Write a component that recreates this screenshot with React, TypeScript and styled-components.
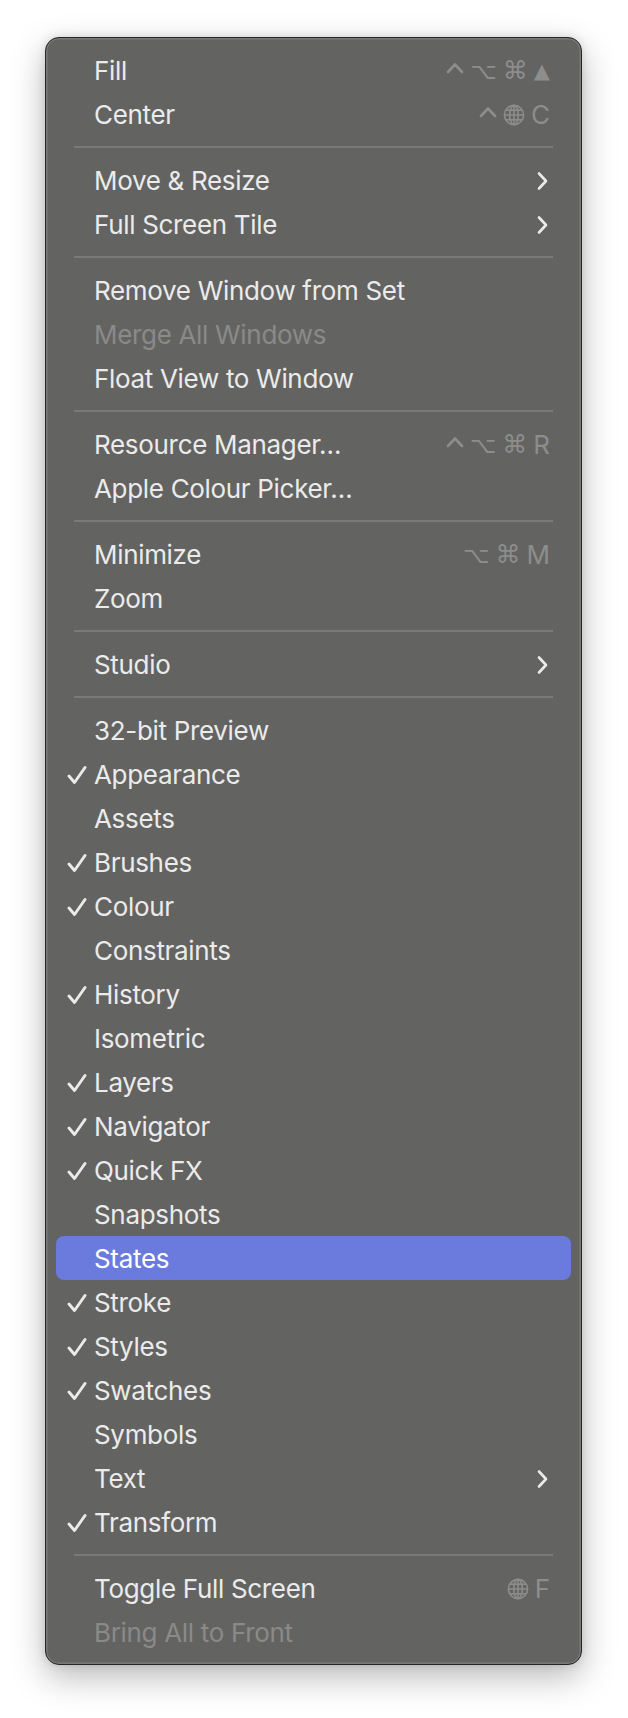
import React from "react";
import styled, { createGlobalStyle } from "styled-components";

const GlobalStyle = createGlobalStyle`
  html, body {
    margin: 0;
    padding: 0;
    background: #ffffff;
  }
  * {
    box-sizing: border-box;
  }
`;

const Page = styled.div`
  width: 628px;
  height: 1718px;
  padding: 37px 0 0 45px;
  font-family: "Inter", "DejaVu Sans", sans-serif;
`;

const Menu = styled.div`
  width: 537px;
  padding: 10px 0;
  background: #636362;
  border: 1px solid #262626;
  border-radius: 14px;
  box-shadow: inset 0 0 0 1.5px rgba(255, 255, 255, 0.14),
    0 12px 34px rgba(0, 0, 0, 0.28), 0 0 10px rgba(0, 0, 0, 0.12);
  display: flex;
  flex-direction: column;
`;

const Row = styled.div<{ $active?: boolean; $disabled?: boolean }>`
  height: 44px;
  margin: 0 10px;
  padding: 1px 21px 0 0;
  border-radius: 8px;
  display: grid;
  grid-template-columns: 38px 1fr auto;
  align-items: center;
  background: ${(p) => (p.$active ? "#6a7bdd" : "transparent")};
  color: ${(p) => (p.$disabled ? "#8a8a89" : p.$active ? "#ffffff" : "#ebebeb")};
  font-size: 26px;
  line-height: 44px;
`;

const CheckCell = styled.div`
  display: flex;
  align-items: center;
  padding-left: 11px;
  height: 44px;
`;

const Label = styled.span`
  white-space: nowrap;
  letter-spacing: -0.32px;
`;

const Shortcut = styled.div`
  display: flex;
  align-items: center;
  gap: 6px;
  color: #8d8d8c;
`;

const Key = styled.span`
  font-family: "Inter", "DejaVu Sans", sans-serif;
  font-size: 26px;
  line-height: 44px;
`;

const Glyph = styled.span<{ $size: number }>`
  font-family: "DejaVu Sans", sans-serif;
  font-size: ${(p) => p.$size}px;
  line-height: 44px;
`;

const Arrow = styled.div`
  display: flex;
  align-items: center;
  margin-right: 2px;
`;

const Separator = styled.div`
  height: 22px;
  display: flex;
  align-items: center;
  padding: 0 28px;
  &::after {
    content: "";
    flex: 1;
    height: 2px;
    background: #7a7a79;
  }
`;

const CheckMark = () => (
  <svg width="20" height="20" viewBox="0 0 20 20">
    <polyline
      points="2,11 7.5,17.5 18,2.5"
      fill="none"
      stroke="#ebebeb"
      strokeWidth="2.9"
      strokeLinecap="round"
      strokeLinejoin="round"
    />
  </svg>
);

const Chevron = () => (
  <svg width="11" height="20" viewBox="0 0 11 20">
    <polyline
      points="2,2.5 9,10 2,17.5"
      fill="none"
      stroke="#ebebeb"
      strokeWidth="2.6"
      strokeLinecap="round"
      strokeLinejoin="round"
    />
  </svg>
);

const Caret = () => (
  <svg width="18" height="12" viewBox="0 0 18 12" style={{ marginBottom: 6 }}>
    <polyline
      points="2,10 9,2.5 16,10"
      fill="none"
      stroke="#8d8d8c"
      strokeWidth="2.6"
      strokeLinecap="round"
      strokeLinejoin="round"
    />
  </svg>
);

const Globe = () => (
  <svg width="22" height="22" viewBox="0 0 22 22" fill="none" stroke="#8d8d8c" strokeWidth="1.6">
    <circle cx="11" cy="11" r="9.6" />
    <ellipse cx="11" cy="11" rx="4.3" ry="9.6" />
    <line x1="11" y1="1.4" x2="11" y2="20.6" />
    <line x1="1.4" y1="11" x2="20.6" y2="11" />
    <line x1="3" y1="6.2" x2="19" y2="6.2" />
    <line x1="3" y1="15.8" x2="19" y2="15.8" />
  </svg>
);

type Item =
  | "sep"
  | {
      label: string;
      check?: boolean;
      disabled?: boolean;
      active?: boolean;
      submenu?: boolean;
      keys?: string[];
    };

const items: Item[] = [
  { label: "Fill", keys: ["ctrl", "⌥", "⌘", "▲"] },
  { label: "Center", keys: ["ctrl", "globe", "C"] },
  "sep",
  { label: "Move & Resize", submenu: true },
  { label: "Full Screen Tile", submenu: true },
  "sep",
  { label: "Remove Window from Set" },
  { label: "Merge All Windows", disabled: true },
  { label: "Float View to Window" },
  "sep",
  { label: "Resource Manager…", keys: ["ctrl", "⌥", "⌘", "R"] },
  { label: "Apple Colour Picker…" },
  "sep",
  { label: "Minimize", keys: ["⌥", "⌘", "M"] },
  { label: "Zoom" },
  "sep",
  { label: "Studio", submenu: true },
  "sep",
  { label: "32-bit Preview" },
  { label: "Appearance", check: true },
  { label: "Assets" },
  { label: "Brushes", check: true },
  { label: "Colour", check: true },
  { label: "Constraints" },
  { label: "History", check: true },
  { label: "Isometric" },
  { label: "Layers", check: true },
  { label: "Navigator", check: true },
  { label: "Quick FX", check: true },
  { label: "Snapshots" },
  { label: "States", active: true },
  { label: "Stroke", check: true },
  { label: "Styles", check: true },
  { label: "Swatches", check: true },
  { label: "Symbols" },
  { label: "Text", submenu: true },
  { label: "Transform", check: true },
  "sep",
  { label: "Toggle Full Screen", keys: ["globe", "F"] },
  { label: "Bring All to Front", disabled: true },
];

const glyphSize: Record<string, number> = { "▲": 21, "⌥": 23, "⌘": 25 };

const renderKey = (k: string, i: number) => {
  if (k === "globe") return <Globe key={i} />;
  if (k === "ctrl") return <Caret key={i} />;
  if (glyphSize[k]) return <Glyph key={i} $size={glyphSize[k]}>{k}</Glyph>;
  return <Key key={i}>{k}</Key>;
};

const App = () => {
  return (
    <Page>
      <GlobalStyle />
      <Menu>
        {items.map((item, idx) => {
          if (item === "sep") return <Separator key={idx} />;
          return (
            <Row key={idx} $active={item.active} $disabled={item.disabled}>
              <CheckCell>{item.check && <CheckMark />}</CheckCell>
              <Label>{item.label}</Label>
              {item.keys ? (
                <Shortcut>{item.keys.map(renderKey)}</Shortcut>
              ) : item.submenu ? (
                <Arrow>
                  <Chevron />
                </Arrow>
              ) : (
                <span />
              )}
            </Row>
          );
        })}
      </Menu>
    </Page>
  );
};

export default App;
